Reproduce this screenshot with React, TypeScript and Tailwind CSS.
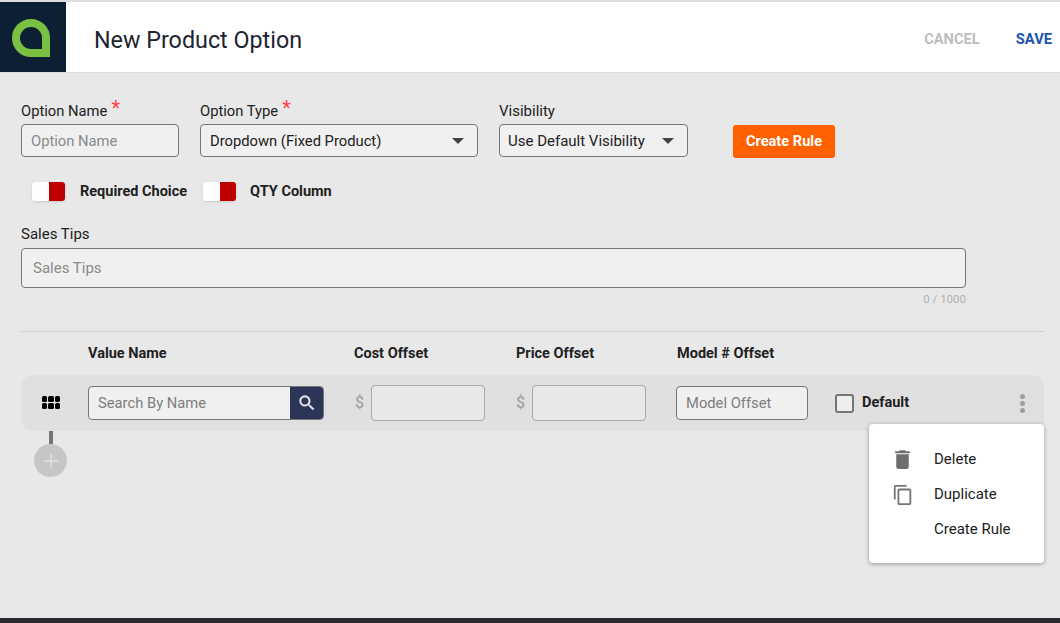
import { Plus } from "lucide-react";

const labelFont = "font-['Roboto',sans-serif]";

const Caret = () => (
  <span className="w-0 h-0 border-x-[6px] border-x-transparent border-t-[6px] border-t-[#424242]" />
);

const Toggle = () => (
  <span className="flex w-[33px] h-[19px] rounded-[3px] overflow-hidden shadow-sm">
    <span className="w-[17px] bg-white" />
    <span className="w-4 bg-[#bf0000]" />
  </span>
);

const Req = () => <span className="text-[#f44] text-xl leading-[0] ml-1 relative top-[-1px]">*</span>;

const Logo = () => (
  <div className="w-[66px] h-[70px] bg-[#0d2033] pl-3 pt-[17px]">
    <svg width="38" height="38" viewBox="0 0 38 38" fill="none">
      <path d="M19 4C10.700 4 4 10.700 4 19S10.700 34 19 34H34V19C34 10.700 27.300 4 19 4Z" stroke="#7ac143" strokeWidth="8" />
    </svg>
  </div>
);

const Offset = () => (
  <div className="flex items-center gap-[7px] ml-[31px]">
    <span className="text-[#a3a3a3] text-base font-medium w-[9px]">$</span>
    <div className="w-[114px] h-9 rounded border border-[#a8a8a8] bg-[#e8e8e8]" />
  </div>
);

export default function App() {
  return (
    <div className={`w-[1060px] h-[623px] overflow-hidden bg-[#e8e8e8] flex flex-col ${labelFont} text-[#212121]`}>
      <div className="h-[2px] bg-[#dedede]" />
      <header className="h-[71px] bg-white border-b border-[#dcdcdc] flex items-start">
        <Logo />
        <h1 className="ml-7 mt-[22px] text-[23.3px] leading-8 text-[#1c2430]">New Product Option</h1>
        <div className="ml-auto mr-2 mt-[27px] flex gap-9 text-[14.7px] font-bold leading-5">
          <span className="text-[#bdbdbd]">CANCEL</span>
          <span className="text-[#1a55b0]">SAVE</span>
        </div>
      </header>

      <main className="relative flex-1 px-[21px] pt-[28px]">
        <div className="flex items-start">
          <div className="w-[158px]">
            <div className="text-[14.75px] leading-5 h-[23px]">Option Name<Req /></div>
            <div className="h-[33px] pt-[1px] rounded border border-[#757575] bg-[#f0f0f0] px-[9px] flex items-center text-[14.75px] text-[#8a8a8a]">Option Name</div>
          </div>
          <div className="w-[278px] ml-[21px]">
            <div className="text-[14.75px] leading-5 h-[23px]">Option Type<Req /></div>
            <div className="h-[33px] rounded border border-[#757575] bg-[#f0f0f0] pl-[9px] pr-[13px] flex items-center justify-between text-[14.75px]">
              <span className="pt-[1px]">Dropdown (Fixed Product)</span>
              <Caret />
            </div>
          </div>
          <div className="w-[189px] ml-[21px]">
            <div className="text-[15px] leading-5 h-[23px]">Visibility</div>
            <div className="h-[33px] rounded border border-[#757575] bg-[#f0f0f0] pl-[8px] pr-[13px] flex items-center justify-between text-[15px]">
              <span className="pt-[1px]">Use Default Visibility</span>
              <Caret />
            </div>
          </div>
          <button className="ml-[45px] mt-[24px] w-[102px] h-[33px] pt-[1px] rounded-[3px] bg-[#ff6000] text-white text-[14.6px] font-bold">Create Rule</button>
        </div>

        <div className="flex items-center mt-[23px] ml-[11px] h-5 text-[14.5px] font-bold">
          <Toggle />
          <span className="ml-[15px] w-[123px] pt-[1px]">Required Choice</span>
          <Toggle />
          <span className="ml-[14px] pt-[1px]">QTY Column</span>
        </div>

        <div className="mt-[23px] text-[15px] leading-5">Sales Tips</div>
        <div className="mt-[4px] w-[945px] h-10 rounded border border-[#757575] bg-[#f0f0f0] px-[11px] flex items-center text-[15px] text-[#8a8a8a]">Sales Tips</div>
        <div className="w-[945px] text-right text-[11.5px] leading-5 text-[#b0b0b0] mt-[1px]">0 / 1000</div>

        <div className="mt-[22px] w-[1023px] border-t border-[#cfcfcf]" />

        <div className="flex text-[14.5px] font-bold h-[43px] pt-[12px] leading-5">
          <span className="ml-[67px] w-[266px]">Value Name</span>
          <span className="w-[162px]">Cost Offset</span>
          <span className="w-[161px]">Price Offset</span>
          <span>Model # Offset</span>
        </div>

        <div className="w-[1023px] h-14 rounded-xl bg-[#e0e0e0] flex items-center">
          <div className="ml-[21px] -mt-[1px] grid grid-cols-3 gap-[1px] w-[18px]">
            {Array.from({ length: 6 }).map((_, i) => (
              <span key={i} className="h-[6px] rounded-[1.5px] bg-black" />
            ))}
          </div>
          <div className="ml-[28px] w-[236px] h-[34px] rounded border border-[#757575] bg-[#f0f0f0] flex overflow-hidden">
            <span className="flex-1 pl-[9px] flex items-center text-[14.75px] text-[#7d7d7d]">Search By Name</span>
            <span className="w-[33px] bg-[#2b3557] flex items-center justify-center">
              <svg width="20" height="20" viewBox="0 0 24 24" fill="#e8e8e8" stroke="#e8e8e8" strokeWidth="0.4">
                <path d="M15.500 14h-.79l-.28-.27C15.410 12.590 16 11.110 16 9.500 16 5.910 13.090 3 9.500 3S3 5.910 3 9.500 5.910 16 9.500 16c1.610 0 3.090-.59 4.230-1.570l.27.28v.79l5 4.990L20.490 19l-4.990-5zm-6 0C7.010 14 5 11.990 5 9.500S7.010 5 9.500 5 14 7.010 14 9.500 11.990 14 9.500 14z" />
              </svg>
            </span>
          </div>
          <Offset />
          <Offset />
          <div className="ml-[30px] w-[132px] h-[34px] rounded border border-[#757575] bg-[#f0f0f0] px-[9px] flex items-center text-[14.75px] text-[#7d7d7d]">Model Offset</div>
          <span className="ml-[27px] w-[19px] h-[19px] rounded-[3px] border-2 border-[#757575] bg-[#eeeeee]" />
          <span className="ml-2 text-[14.5px] font-bold">Default</span>
          <div className="ml-auto mr-[19px] flex flex-col gap-[2px]">
            <span className="w-[5px] h-[5px] rounded-full bg-[#9e9e9e]" />
            <span className="w-[5px] h-[5px] rounded-full bg-[#9e9e9e]" />
            <span className="w-[5px] h-[5px] rounded-full bg-[#9e9e9e]" />
          </div>
        </div>

        <div className="ml-[13px] flex flex-col items-center w-[33px]">
          <span className="w-1 h-[13px] bg-[#757575]" />
          <span className="w-[33px] h-[33px] rounded-full bg-[#c6c6c6] flex items-center justify-center">
            <Plus size={22} className="text-[#dcdcdc]" />
          </span>
        </div>

        <div className="absolute left-[869px] top-[351px] w-[175px] h-[139px] rounded bg-white shadow-[0_1px_4px_rgba(0,0,0,0.35)] pt-[18px] text-[15px]">
          <div className="flex items-center h-[35px]">
            <span className="w-[65px] pl-[21px]">
              <svg width="25" height="25" viewBox="0 0 24 24" fill="#6e6e6e">
                <path d="M6 19c0 1.100.9 2 2 2h8c1.100 0 2-.9 2-2V7H6v12zM19 4h-3.500l-1-1h-5l-1 1H5v2h14V4z" />
              </svg>
            </span>
            <span>Delete</span>
          </div>
          <div className="flex items-center h-[35px]">
            <span className="w-[65px] pl-[23px] pt-[1px]">
              <svg width="22" height="22" viewBox="0 0 24 24" fill="#757575">
                <path d="M16 1H4c-1.100 0-2 .9-2 2v14h2V3h12V1zm3 4H8c-1.100 0-2 .9-2 2v14c0 1.100.9 2 2 2h11c1.100 0 2-.9 2-2V7c0-1.100-.9-2-2-2zm0 16H8V7h11v14z" />
              </svg>
            </span>
            <span>Duplicate</span>
          </div>
          <div className="flex items-center h-[35px]">
            <span className="ml-[65px]">Create Rule</span>
          </div>
        </div>
      </main>

      <div className="h-[5px] bg-[#2b2b30]" />
    </div>
  );
}
